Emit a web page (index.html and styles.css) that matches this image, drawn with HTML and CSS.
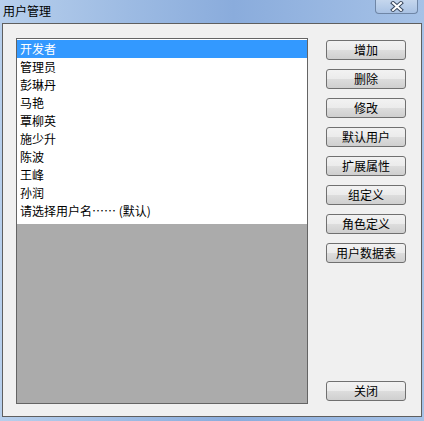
FILE: index.html
```html
<!DOCTYPE html>
<html lang="zh-CN">
<head>
    <meta charset="UTF-8">
    <title>用户管理</title>
    <link rel="stylesheet" href="styles.css">
</head>
<body>
    <div class="window">
        <div class="titlebar">
            <span class="title">用户管理</span>
            <div class="close-btn">
                <svg width="16" height="11" viewBox="0 0 16 11">
                    <path d="M4 2 L12 9 M12 2 L4 9" stroke="#3b4a60" stroke-width="4" stroke-linecap="square"/>
                    <path d="M4 2 L12 9 M12 2 L4 9" stroke="#ffffff" stroke-width="2" stroke-linecap="square"/>
                </svg>
            </div>
        </div>
        <div class="client">
            <div class="list">
                <div class="rows">
                    <div class="row selected">开发者</div>
                    <div class="row">管理员</div>
                    <div class="row">彭琳丹</div>
                    <div class="row">马艳</div>
                    <div class="row">覃柳英</div>
                    <div class="row">施少升</div>
                    <div class="row">陈波</div>
                    <div class="row">王峰</div>
                    <div class="row">孙润</div>
                    <div class="row">请选择用户名…… (默认)</div>
                </div>
            </div>
            <div class="buttons">
                <button>增加</button>
                <button>删除</button>
                <button>修改</button>
                <button>默认用户</button>
                <button>扩展属性</button>
                <button>组定义</button>
                <button>角色定义</button>
                <button>用户数据表</button>
                <div class="spacer"></div>
                <button>关闭</button>
            </div>
        </div>
    </div>
</body>
</html>
```

FILE: styles.css
```css
body {
    margin: 0;
    font-family: "Noto Sans CJK SC", "Liberation Sans", sans-serif;
    font-size: 12px;
}

.window {
    width: 424px;
    height: 421px;
    background: linear-gradient(to right, #b7cfec 0%, #9dbbe3 30%, #8aacdc 55%, #a6c2e7 100%);
    display: flex;
    flex-direction: column;
}

.titlebar {
    height: 23px;
    display: flex;
    justify-content: space-between;
    align-items: flex-start;
}

.title {
    margin: 3px 0 0 3px;
    font-size: 12px;
    line-height: 16px;
    color: #000;
}

.close-btn {
    width: 41px;
    height: 14px;
    margin: -1px 6px 0 0;
    border: 1px solid #6f86a6;
    border-top: none;
    border-radius: 0 0 4px 4px;
    background: linear-gradient(#c7d8ee, #a9c2e4);
    display: flex;
    justify-content: center;
    align-items: center;
}

.client {
    height: 394px;
    margin: 0 2px 4px 2px;
    border: 1px solid #5f5f5f;
    background: #f0f0f0;
    display: flex;
    padding: 14px 0 0 13px;
    box-sizing: border-box;
}

.list {
    width: 292px;
    height: 366px;
    box-sizing: border-box;
    border: 1px solid #646464;
    background: #ababab;
}

.rows {
    background: #fff;
    padding: 1px 0 4px 0;
}

.row {
    height: 18px;
    line-height: 18px;
    padding-left: 3px;
    color: #000;
    white-space: nowrap;
}

.row.selected {
    background: #3399ff;
    color: #fff;
}

.buttons {
    display: flex;
    flex-direction: column;
    gap: 9px;
    margin-left: 18px;
    padding-top: 2px;
    height: 361px;
}

.spacer {
    flex: 1;
}

button {
    width: 80px;
    height: 20px;
    padding: 0;
    border: 1px solid #707070;
    border-radius: 3px;
    background: linear-gradient(#f2f2f2 0%, #ebebeb 50%, #dddddd 50%, #cfcfcf 100%);
    font-family: "Noto Sans CJK SC", "Liberation Sans", sans-serif;
    font-size: 12px;
    line-height: 18px;
    color: #000;
}
```
